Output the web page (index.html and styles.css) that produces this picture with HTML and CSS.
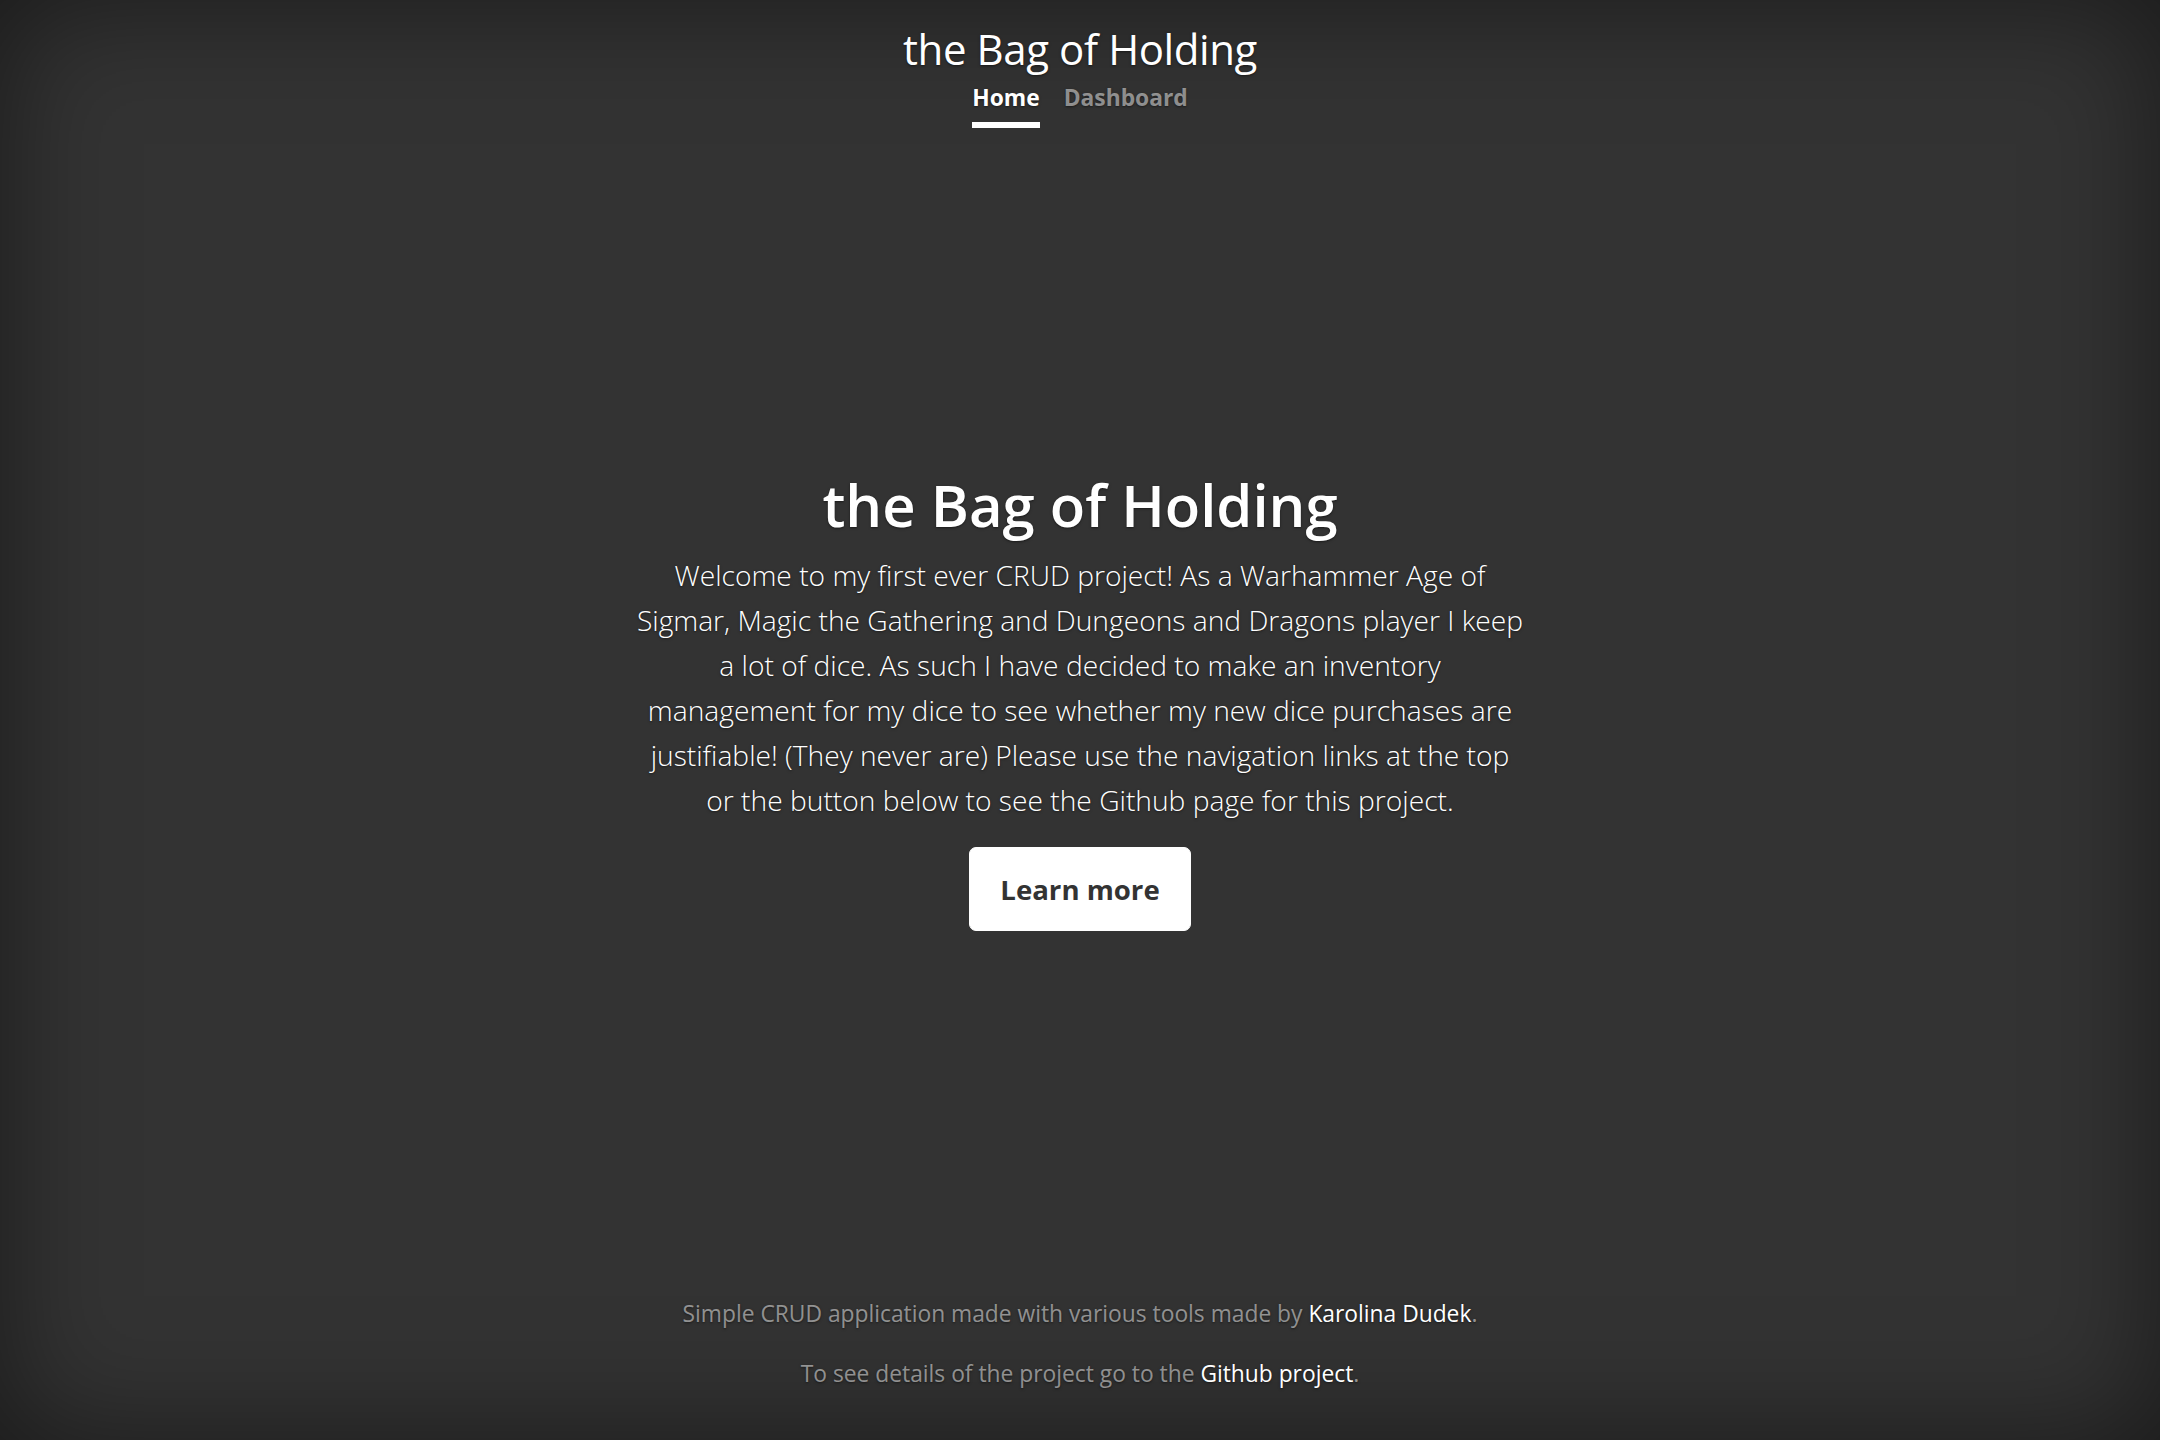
FILE: index.html
```html
<!DOCTYPE html>
<html lang="en">
<head>
<meta charset="utf-8">
<title>the Bag of Holding</title>
<link rel="stylesheet" href="styles.css">
</head>
<body>
<div class="cover-container">
  <header class="masthead">
    <h3 class="masthead-brand">the Bag of Holding</h3>
    <nav class="nav-masthead">
      <a class="nav-link active" href="#">Home</a>
      <a class="nav-link" href="#">Dashboard</a>
    </nav>
  </header>
  <main class="cover">
    <h1 class="cover-heading">the Bag of Holding</h1>
    <p class="lead">Welcome to my first ever CRUD project! As a Warhammer Age of<br>
    Sigmar, Magic the Gathering and Dungeons and Dragons player I keep<br>
    a lot of dice. As such I have decided to make an inventory<br>
    management for my dice to see whether my new dice purchases are<br>
    justifiable! (They never are) Please use the navigation links at the top<br>
    or the button below to see the Github page for this project.</p>
    <p class="lead action"><a href="#" class="btn">Learn more</a></p>
  </main>
  <footer class="mastfoot">
    <p>Simple CRUD application made with various tools made by <a href="#">Karolina Dudek</a>.</p>
    <p>To see details of the project go to the <a href="#">Github project</a>.</p>
  </footer>
</div>
</body>
</html>
```

FILE: styles.css
```css
html {
  font-size: 24px;
  height: 100%;
}
body {
  margin: 0;
  height: 100%;
  background-color: #333;
  color: #fff;
  font-family: "Open Sans", "Noto Sans", sans-serif;
  font-size: 1rem;
  line-height: 1.5;
  text-align: center;
  text-shadow: 0 0.05rem 0.1rem rgba(0, 0, 0, 0.5);
  box-shadow: inset 0 0 5rem rgba(0, 0, 0, 0.5);
}
a {
  color: #fff;
  text-decoration: none;
}
.cover-container {
  box-sizing: border-box;
  display: flex;
  flex-direction: column;
  height: 100%;
  max-width: 42rem;
  margin: 0 auto;
  padding: 1rem;
}
.masthead {
  margin-bottom: auto;
  display: flex;
  flex-direction: column;
  align-items: center;
}
.masthead-brand {
  margin: 0;
  font-size: 1.75rem;
  font-weight: 400;
  line-height: 50px;
  letter-spacing: -0.01em;
}
.nav-masthead {
  display: flex;
  justify-content: center;
  gap: 1rem;
}
.nav-link {
  padding: 0.25rem 0;
  font-weight: 700;
  color: rgba(255, 255, 255, 0.5);
  border-bottom: 0.25rem solid transparent;
  font-size: 22.8px;
  line-height: 36px;
}
.nav-link.active {
  color: #fff;
  border-bottom-color: #fff;
}
.cover {
  padding: 0 1.5rem;
}
.cover-heading {
  margin: 0 0 12px;
  font-size: 58px;
  font-weight: 600;
  line-height: 72px;
}
.lead {
  margin: 0 0 1rem;
  font-size: 28.2px;
  font-weight: 300;
  line-height: 45px;
  white-space: nowrap;
}
.action {
  line-height: 1;
}
.btn {
  display: inline-block;
  padding: 18px 30px;
  font-size: 27.6px;
  font-weight: 700;
  line-height: 46px;
  color: #333;
  background: #fff;
  border: 1px solid #fff;
  border-radius: 7px;
  text-shadow: none;
}
.mastfoot {
  margin-top: auto;
  color: rgba(255, 255, 255, 0.5);
  font-size: 22.8px;
  line-height: 36px;
}
.mastfoot p {
  margin: 0 0 1rem;
}
```
